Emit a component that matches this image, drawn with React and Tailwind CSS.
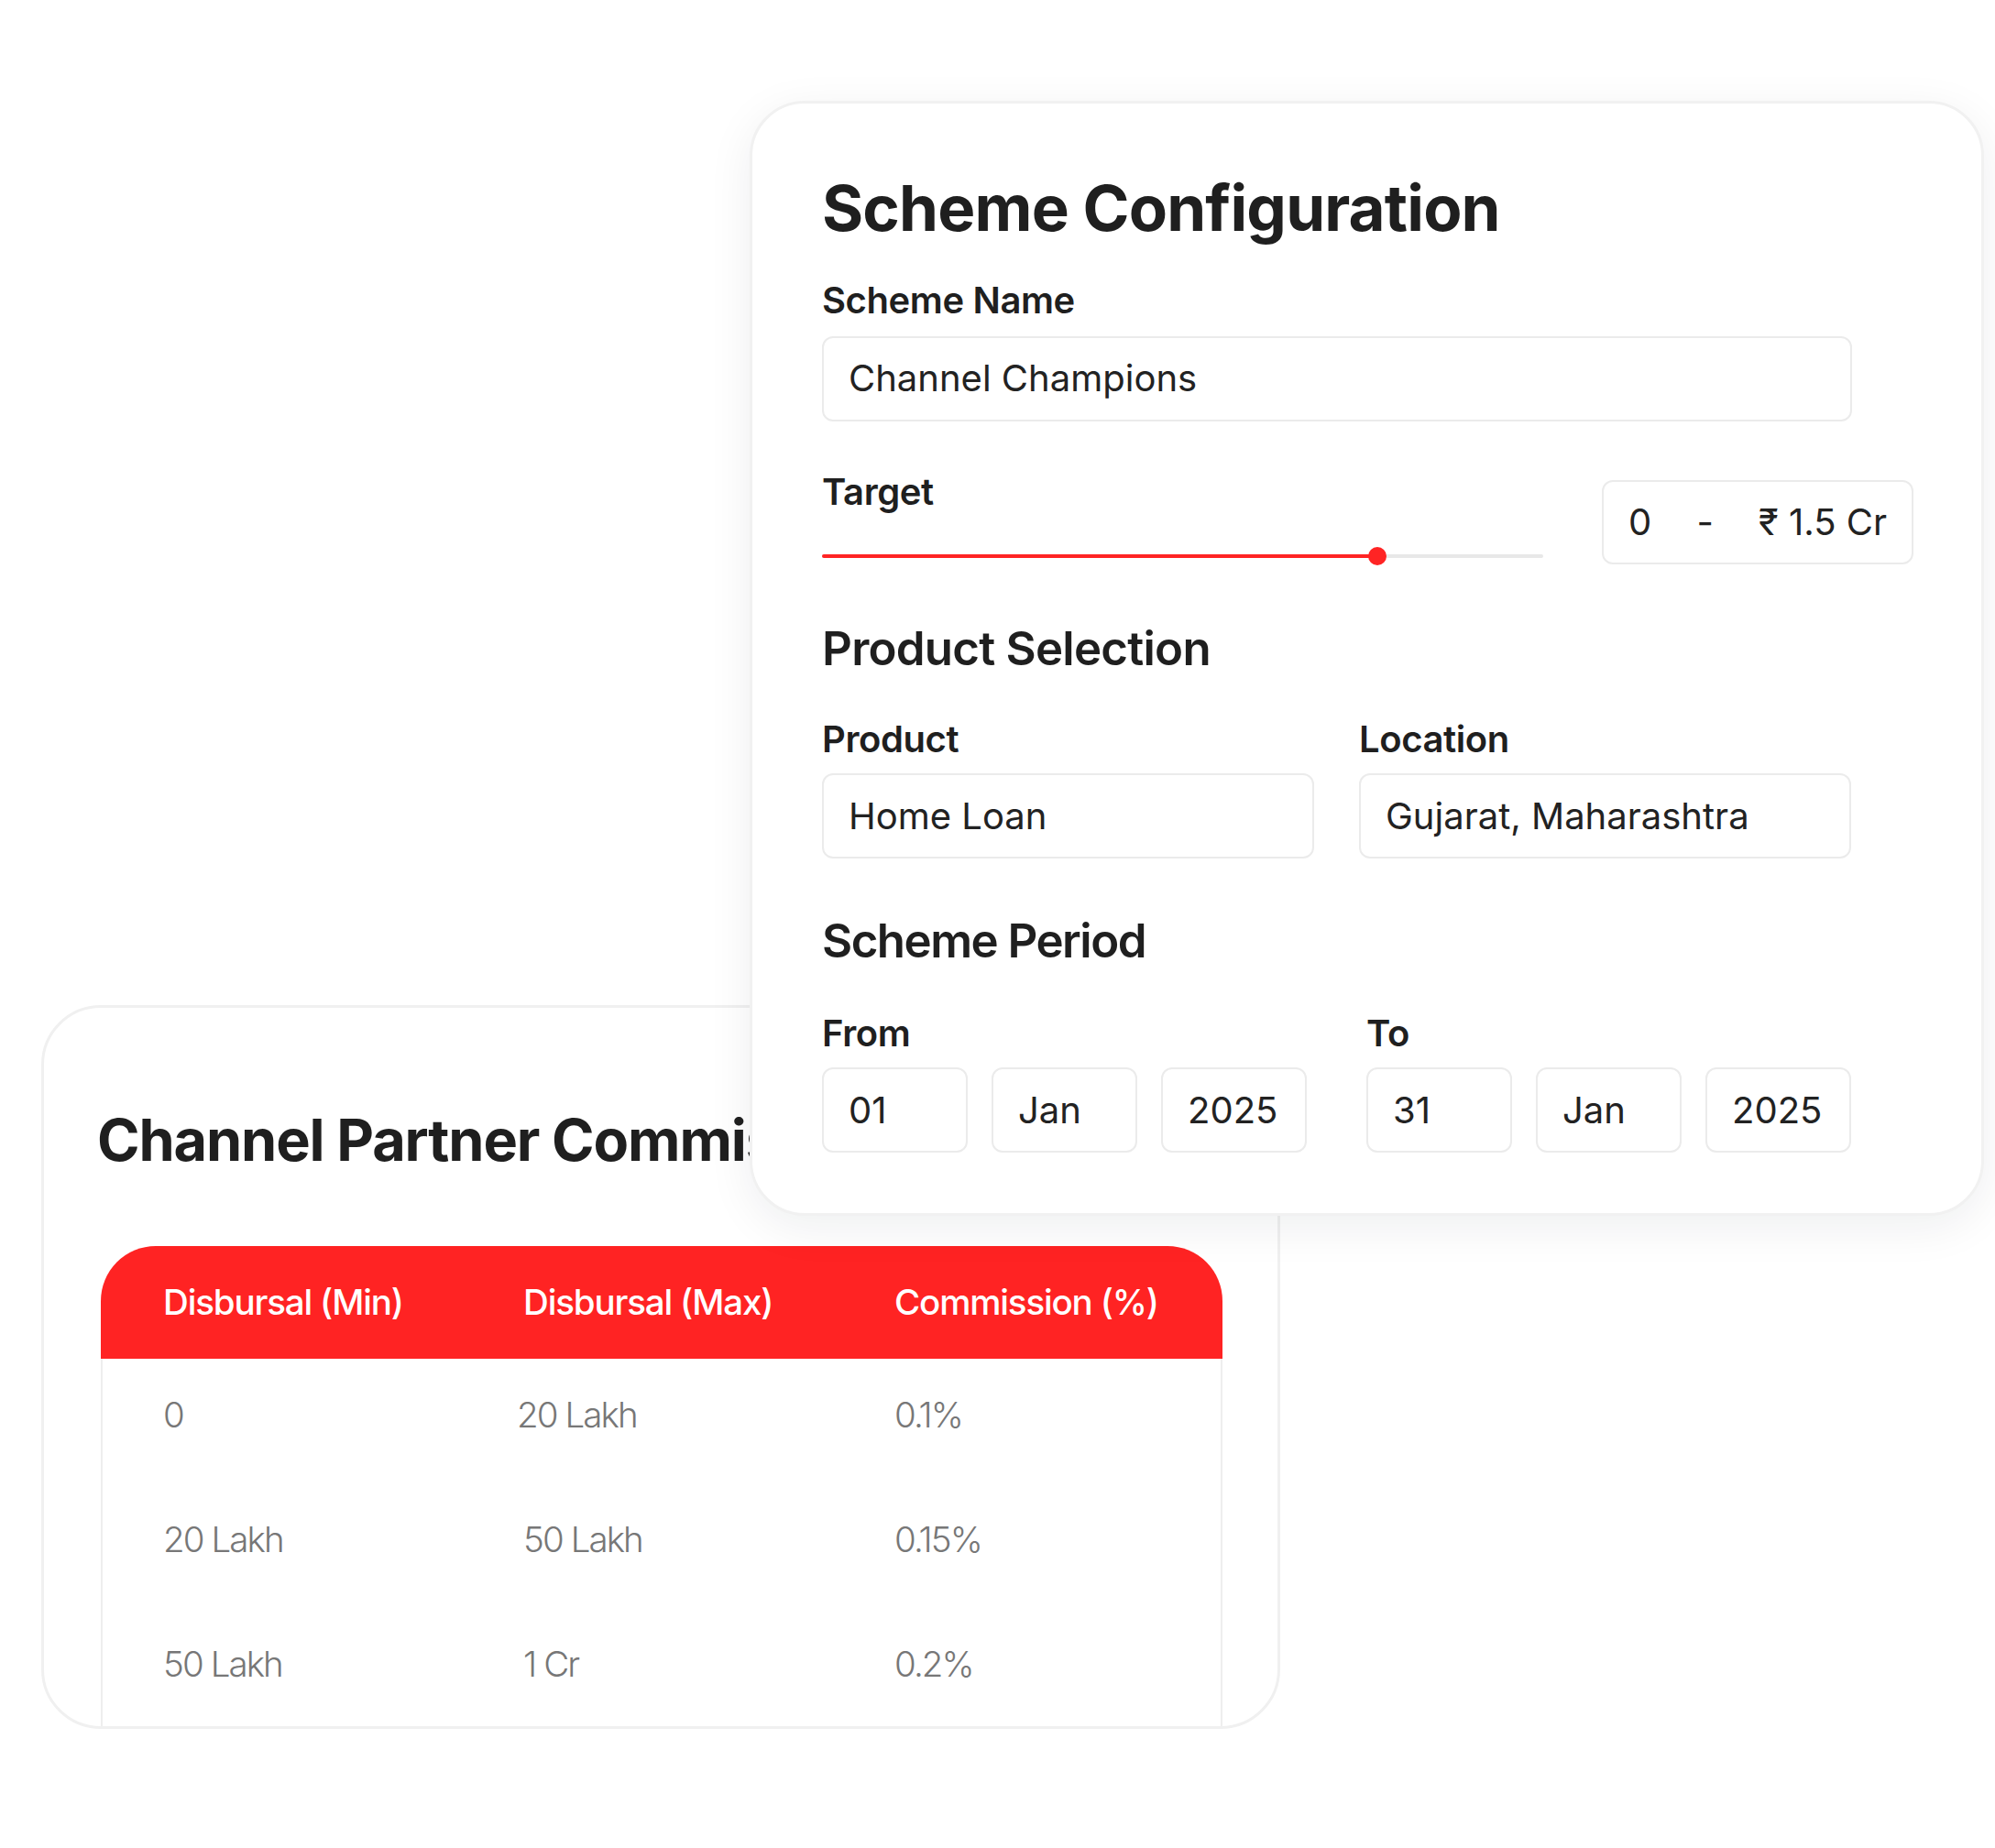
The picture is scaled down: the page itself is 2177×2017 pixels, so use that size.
const rows = [
  { min: '0', max: '20 Lakh', pct: '0.1%', maxShift: true },
  { min: '20 Lakh', max: '50 Lakh', pct: '0.15%' },
  { min: '50 Lakh', max: '1 Cr', pct: '0.2%' },
];

function Field({ children, className = '' }) {
  return (
    <div
      className={`flex h-[93px] items-center rounded-[12px] border-2 border-[#ebebeb] bg-white px-[27px] text-[40px] leading-none text-[#222] ${className}`}
    >
      {children}
    </div>
  );
}

function Label({ children }) {
  return <p className="text-[40px] font-semibold leading-none tracking-[-0.01em] text-[#1f1f1f]">{children}</p>;
}

function DateGroup({ label, values }) {
  return (
    <div className="w-[529px]">
      <Label>{label}</Label>
      <div className="mt-[17.5px] flex gap-[26px]">
        {values.map((value, index) => (
          <Field key={index} className="h-[92px] w-[159px]">
            {value}
          </Field>
        ))}
      </div>
    </div>
  );
}

function SchemeCard() {
  return (
    <section className="relative z-10 ml-[818px] h-[1217px] w-[1347px] rounded-[60px] border-[3px] border-[#f1f1f1] bg-white pl-[76px] pt-[80px] shadow-[0_12px_50px_rgba(16,24,40,0.07)]">
      <h1 className="text-[69px] font-bold leading-none tracking-[-0.012em] text-[#1f1f1f]">Scheme Configuration</h1>

      <div className="mt-[46px]">
        <Label>Scheme Name</Label>
      </div>
      <Field className="mt-[18.5px] w-[1124px]">Channel Champions</Field>

      <div className="mt-[57px] flex items-start">
        <div className="w-[787px]">
          <Label>Target</Label>
          <div className="relative mt-[40.5px] flex h-[20px] items-center">
            <div className="h-[4px] w-full rounded-full bg-[#e8e8e8]">
              <div className="h-full w-[606px] rounded-full bg-[#ff2424]" />
            </div>
            <div className="absolute left-[596px] top-0 h-[20px] w-[20px] rounded-full bg-[#ff2424]" />
          </div>
        </div>
        <div className="ml-[64px] mt-[7.5px] flex h-[92px] w-[340px] items-center justify-between rounded-[12px] border-2 border-[#ebebeb] px-[27px] text-[40px] leading-none text-[#222]">
          <span>0</span>
          <span>-</span>
          <span>₹ 1.5 Cr</span>
        </div>
      </div>

      <h2 className="mt-[65px] text-[51px] font-semibold leading-none tracking-[-0.015em] text-[#1f1f1f]">Product Selection</h2>
      <div className="mt-[53.5px] flex gap-[49px]">
        <div className="w-[537px]">
          <Label>Product</Label>
          <Field className="mt-[17.5px]">Home Loan</Field>
        </div>
        <div className="w-[537px]">
          <Label>Location</Label>
          <Field className="mt-[17.5px]">Gujarat, Maharashtra</Field>
        </div>
      </div>

      <h2 className="mt-[64px] text-[51px] font-semibold leading-none tracking-[-0.03em] text-[#1f1f1f]">Scheme Period</h2>
      <div className="mt-[55.5px] flex gap-[65px]">
        <DateGroup label="From" values={['01', 'Jan', '2025']} />
        <DateGroup label="To" values={['31', 'Jan', '2025']} />
      </div>
    </section>
  );
}

function CommissionCard() {
  return (
    <section className="-mt-[230px] ml-[45px] h-[790px] w-[1352px] overflow-hidden rounded-[65px] border-[3px] border-[#f0f0f0] bg-white pl-[62px] pt-[113px]">
      <h2 className="-ml-[4px] whitespace-nowrap text-[63px] font-bold leading-none tracking-[-0.018em] text-[#1f1f1f]">
        Channel Partner Commission Structure
      </h2>

      <div className="mt-[84px] w-[1224px]">
        <div className="grid h-[123px] grid-cols-[393px_405px_1fr] items-center rounded-t-[60px] bg-[#ff2323] pl-[68px] text-[38.5px] font-medium leading-none tracking-[-0.03em] text-white">
          <span>Disbursal (Min)</span>
          <span>Disbursal (Max)</span>
          <span>Commission (%)</span>
        </div>
        <div className="border-x-2 border-[#eeeeee]">
          {rows.map((row) => (
            <div
              key={row.min}
              className="grid h-[136px] grid-cols-[393px_405px_1fr] pl-[66px] pt-[42px] text-[38.5px] font-light leading-none tracking-[-0.05em] text-[#777]"
            >
              <span>{row.min}</span>
              <span className={row.maxShift ? '-ml-[7px]' : ''}>{row.max}</span>
              <span>{row.pct}</span>
            </div>
          ))}
        </div>
      </div>
    </section>
  );
}

export default function App() {
  return (
    <div className="relative h-[2017px] w-[2177px] overflow-hidden bg-white font-['Inter','Noto_Sans',sans-serif]">
      <div className="pt-[110px]">
        <SchemeCard />
        <CommissionCard />
      </div>
    </div>
  );
}
